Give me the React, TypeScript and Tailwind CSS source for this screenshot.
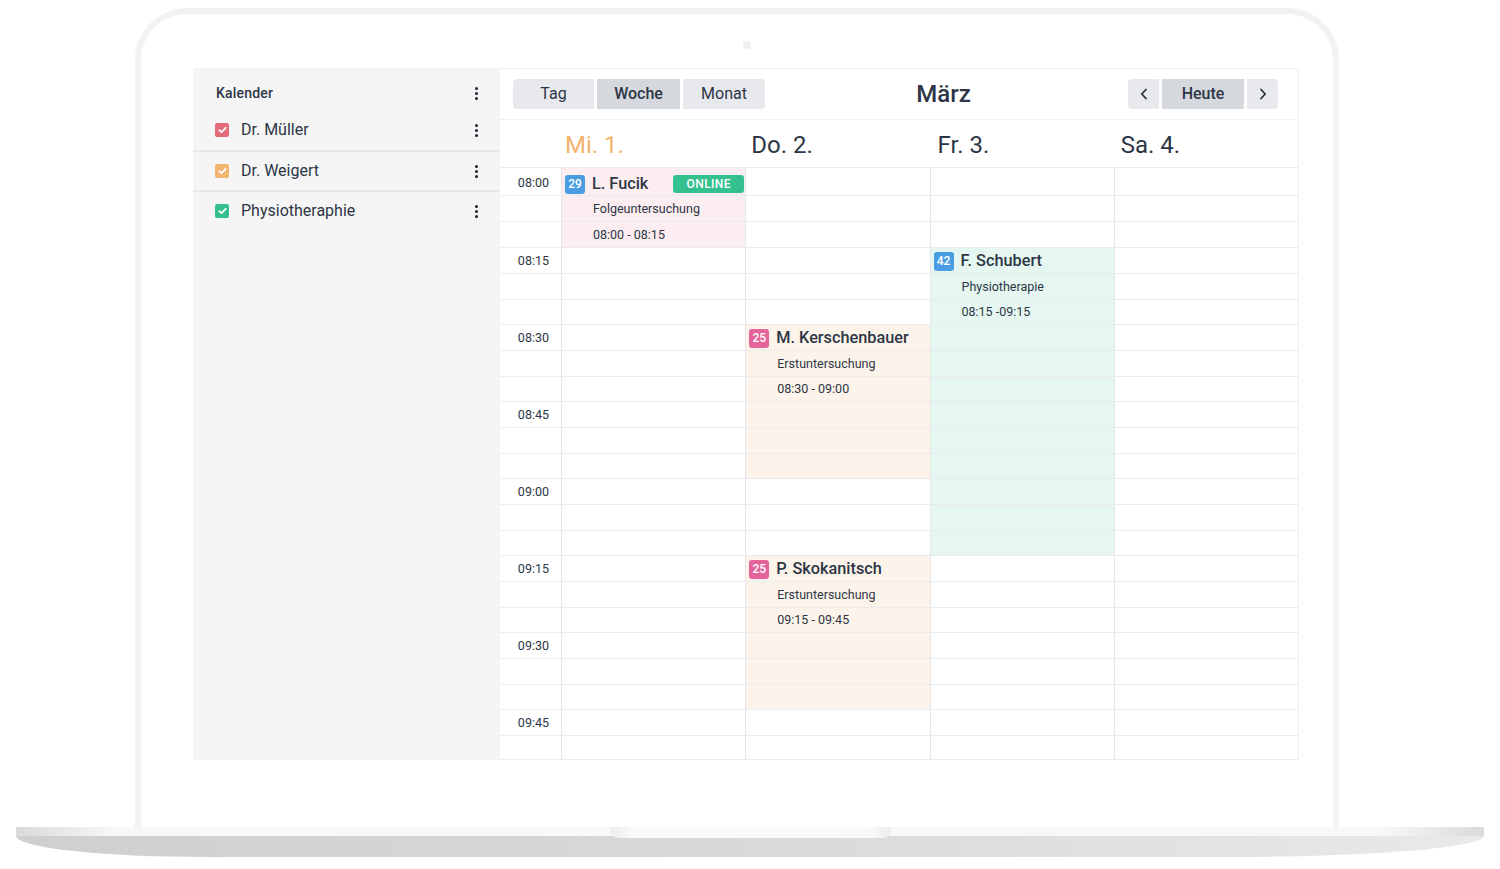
import React from 'react';

// slot rows: first slot is a bit taller, last one is cut off by the screen edge
const rowHeights = [28, 26, 26, ...Array(6).fill([26, 26, 25]).flat(), 26, 24];
const rowTops = rowHeights.reduce<number[]>((acc, h, i) => {
  acc.push(i === 0 ? 0 : acc[i - 1] + rowHeights[i - 1]);
  return acc;
}, []);

const times = ['08:00', '08:15', '08:30', '08:45', '09:00', '09:15', '09:30', '09:45'];

interface CalEvent {
  day: number;
  start: number;
  rows: number;
  badge: string;
  badgeColor: string;
  bg: string;
  name: string;
  kind: string;
  time: string;
  online?: boolean;
}

const events: CalEvent[] = [
  { day: 0, start: 0, rows: 3, badge: '29', badgeColor: 'bg-[#4a9de2]', bg: 'bg-[#fcedf0]', name: 'L. Fucik', kind: 'Folgeuntersuchung', time: '08:00 - 08:15', online: true },
  { day: 2, start: 3, rows: 12, badge: '42', badgeColor: 'bg-[#4a9de2]', bg: 'bg-[#e5f7f0]', name: 'F. Schubert', kind: 'Physiotherapie', time: '08:15 -09:15' },
  { day: 1, start: 6, rows: 6, badge: '25', badgeColor: 'bg-[#e2649b]', bg: 'bg-[#fcf3ea]', name: 'M. Kerschenbauer', kind: 'Erstuntersuchung', time: '08:30 - 09:00' },
  { day: 1, start: 15, rows: 6, badge: '25', badgeColor: 'bg-[#e2649b]', bg: 'bg-[#fcf3ea]', name: 'P. Skokanitsch', kind: 'Erstuntersuchung', time: '09:15 - 09:45' },
];

const days = [
  { label: 'Mi. 1.', today: true, pad: 'pl-[4px]' },
  { label: 'Do. 2.', pad: 'pl-[6px]' },
  { label: 'Fr. 3.', pad: 'pl-[8px]' },
  { label: 'Sa. 4.', pad: 'pl-[7px]' },
];

const calendars = [
  { name: 'Dr. Müller', color: 'bg-[#e46c78]' },
  { name: 'Dr. Weigert', color: 'bg-[#f3b670]' },
  { name: 'Physiotheraphie', color: 'bg-[#34c08d]' },
];

function Kebab() {
  return (
    <div className="flex flex-col gap-[2px]">
      <span className="w-[3px] h-[3px] rounded-full bg-[#1c2230]" />
      <span className="w-[3px] h-[3px] rounded-full bg-[#1c2230]" />
      <span className="w-[3px] h-[3px] rounded-full bg-[#1c2230]" />
    </div>
  );
}

function CheckBox({ color }: { color: string }) {
  return (
    <div className={`w-[14px] h-[14px] rounded-[2px] flex items-center justify-center ${color}`}>
      <svg width="9" height="8" viewBox="0 0 9 8" fill="none">
        <path d="M1.3 4.2 L3.5 6.2 L7.7 1.8" stroke="white" strokeWidth="1.8" strokeLinecap="round" strokeLinejoin="round" />
      </svg>
    </div>
  );
}

function Chevron({ dir }: { dir: 'left' | 'right' }) {
  return (
    <svg width="8" height="12" viewBox="0 0 8 12" fill="none">
      <path
        d={dir === 'left' ? 'M6 1.5 L1.8 6 L6 10.5' : 'M2 1.5 L6.2 6 L2 10.5'}
        stroke="#2a3242"
        strokeWidth="1.8"
        strokeLinecap="round"
        strokeLinejoin="round"
      />
    </svg>
  );
}

function Sidebar() {
  return (
    <div className="w-[307px] shrink-0 bg-[#f5f5f5] text-[#2d3646]">
      <div className="h-[50px] flex items-center justify-between pl-[23px] pr-[22px]">
        <span className="text-[14px] font-medium tracking-[0.2px]">Kalender</span>
        <Kebab />
      </div>
      {calendars.map((c, i) => (
        <div
          key={c.name}
          className={
            i === 0
              ? 'h-[32px] pb-[8px] flex items-center justify-between pl-[22px] pr-[22px]'
              : 'h-[40px] border-t-2 border-[#e6e6e6] flex items-center justify-between pl-[22px] pr-[22px]'
          }
        >
          <div className="flex items-center gap-[12px]">
            <CheckBox color={c.color} />
            <span className="text-[16px]">{c.name}</span>
          </div>
          <Kebab />
        </div>
      ))}
    </div>
  );
}

function Toolbar() {
  return (
    <div className="h-[51px] border-b border-[#f0f0f0] flex items-center pl-[13px] pr-[20px] text-[#2d3646]">
      <div className="flex gap-[3px] text-[16px]">
        <button className="w-[81px] h-[30px] rounded-l-[4px] bg-[#e8e9ec]">Tag</button>
        <button className="w-[83px] h-[30px] bg-[#d5d8dd] font-medium">Woche</button>
        <button className="w-[82px] h-[30px] rounded-r-[4px] bg-[#e8e9ec]">Monat</button>
      </div>
      <div className="flex-1 text-center text-[24px] font-medium pr-[6px]">März</div>
      <div className="flex gap-[3px] text-[16px]">
        <button className="w-[31px] h-[30px] rounded-l-[4px] bg-[#e8e9ec] flex items-center justify-center">
          <Chevron dir="left" />
        </button>
        <button className="w-[82px] h-[30px] bg-[#d5d8dd] font-medium">Heute</button>
        <button className="w-[31px] h-[30px] rounded-r-[4px] bg-[#e8e9ec] flex items-center justify-center">
          <Chevron dir="right" />
        </button>
      </div>
    </div>
  );
}

function EventCard({ ev }: { ev: CalEvent }) {
  const top = rowTops[ev.start];
  const height = rowTops[ev.start + ev.rows - 1] + rowHeights[ev.start + ev.rows - 1] - top;
  const first = ev.start === 0;
  return (
    <div className={`absolute left-0 right-0 ${ev.bg}`} style={{ top, height }}>
      <div
        className={`flex items-center pl-[3px] pr-[1px] ${first ? 'pt-[4px]' : ''}`}
        style={{ height: rowHeights[ev.start] }}
      >
        <span className={`w-[20px] h-[19px] rounded-[3px] text-white text-[12px] font-medium flex items-center justify-center ${ev.badgeColor}`}>
          {ev.badge}
        </span>
        <span className="ml-[7px] text-[16.3px] font-medium text-[#2d3646] whitespace-nowrap">{ev.name}</span>
        {ev.online && (
          <span className="ml-auto w-[71px] h-[18px] rounded-[3px] bg-[#35c18f] text-white text-[12px] font-medium tracking-[0.4px] flex items-center justify-center">
            ONLINE
          </span>
        )}
      </div>
      <div className="flex items-center pl-[31px] text-[12.5px] text-[#2d3646]" style={{ height: rowHeights[ev.start + 1] }}>
        {ev.kind}
      </div>
      <div className="flex items-center pl-[31px] text-[12.5px] text-[#2d3646]" style={{ height: rowHeights[ev.start + 2] }}>
        {ev.time}
      </div>
    </div>
  );
}

function WeekGrid() {
  return (
    <div className="grid grid-cols-[61px_repeat(4,1fr)]">
      <div>
        {rowHeights.map((h, i) => (
          <div
            key={i}
            className={`border-b border-[#ededef] flex items-center justify-end pr-[12px] text-[12.5px] text-[#2d3646] ${i === 0 ? 'pt-[4px]' : 'pt-[2px]'}`}
            style={{ height: h }}
          >
            {i % 3 === 0 ? times[i / 3] : ''}
          </div>
        ))}
      </div>
      {days.map((_, d) => (
        <div key={d} className="relative border-l border-[#e6e6e8]">
          {events
            .filter((e) => e.day === d)
            .map((e) => (
              <EventCard key={e.name} ev={e} />
            ))}
          <div className="relative z-10 pointer-events-none">
            {rowHeights.map((h, i) => (
              <div key={i} className="border-b border-[#ebebed]" style={{ height: h }} />
            ))}
          </div>
        </div>
      ))}
    </div>
  );
}

function Calendar() {
  return (
    <div className="flex-1 bg-white border-t border-r border-[#efeff0]">
      <Toolbar />
      <div className="grid grid-cols-[61px_repeat(4,1fr)] h-[48px] border-b border-[#ebebed]">
        <div />
        {days.map((d) => (
          <div
            key={d.label}
            className={`flex items-center pt-[3px] text-[24px] ${d.pad} ${d.today ? 'text-[#f2b36d]' : 'text-[#2d3646]'}`}
          >
            {d.label}
          </div>
        ))}
      </div>
      <WeekGrid />
    </div>
  );
}

export default function App() {
  return (
    <div className="w-[1500px] h-[869px] bg-white overflow-hidden font-['Roboto',sans-serif]">
      {/* lid */}
      <div className="ml-[135px] mt-[8px] w-[1204px] h-[819px] rounded-t-[52px] border-[6px] border-b-0 border-[#f2f2f3]">
        <div className="flex justify-center pl-[20px] pt-[27px]">
          <span className="w-[8px] h-[8px] rounded-full bg-[#efeff0]" />
        </div>
        <div className="ml-[52px] mt-[19px] w-[1106px] h-[692px] flex">
          <Sidebar />
          <Calendar />
        </div>
      </div>
      {/* base */}
      <div className="ml-[16px] w-[1468px]">
        <div className="h-[9px] flex justify-center bg-[linear-gradient(90deg,#dadada_0%,#f8f8f8_7%,#f8f8f8_93%,#dadada_100%)]">
          <div className="relative z-10 w-[281px] h-[11px] rounded-b-[8px] bg-[linear-gradient(90deg,#ececf0_0%,#f9f9fc_8%,#f9f9fc_92%,#ececf0_100%)]" />
        </div>
        <div className="h-[21px] rounded-bl-[190px_21px] rounded-br-[260px_21px] bg-[linear-gradient(90deg,#cfcfcf_0%,#d9d9d9_50%,#e9e9e9_100%)]" />
      </div>
    </div>
  );
}
